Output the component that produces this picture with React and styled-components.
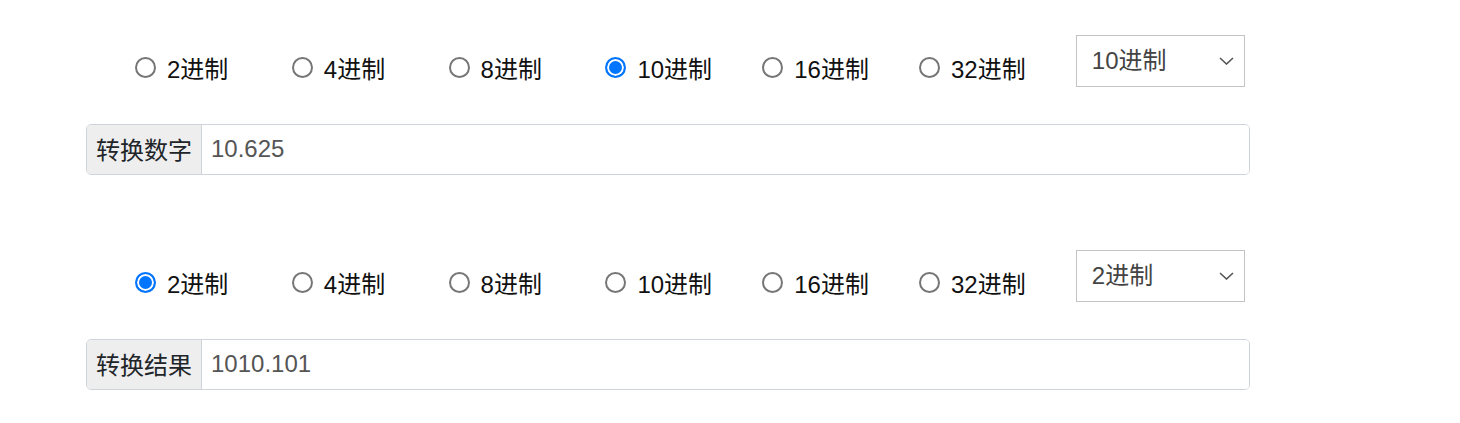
import React, { useState } from 'react';
import styled, { createGlobalStyle } from 'styled-components';

const GlobalStyle = createGlobalStyle`
  body {
    margin: 0;
    background: #fff;
    font-family: "Liberation Sans", "Noto Sans CJK SC", sans-serif;
    color: #212529;
  }
`;

const Page = styled.div`
  padding: 35px 0 0 86px;
  width: 1164px;
`;

const Block = styled.div`
  margin-bottom: 75px;
`;

const RadioRow = styled.div`
  display: flex;
  align-items: flex-start;
  padding-left: 49px;
  height: 52px;
`;

const RadioItem = styled.label`
  display: flex;
  align-items: center;
  gap: 11px;
  width: 156.8px;
  height: 36px;
  margin-top: 14px;
  font-size: 24px;
  color: #111;
  cursor: pointer;
`;

const Radio = styled.input`
  appearance: none;
  box-sizing: border-box;
  width: 21px;
  height: 21px;
  margin: 0;
  border-radius: 50%;
  border: 2px solid #767676;
  background: #fff;
  cursor: pointer;

  &:checked {
    border-color: #0075ff;
    background: #0075ff;
    box-shadow: inset 0 0 0 2px #fff;
  }
`;

const SelectWrap = styled.div`
  position: relative;
  width: 169px;
  height: 52px;

  svg {
    position: absolute;
    right: 11px;
    top: 22px;
    pointer-events: none;
  }
`;

const Select = styled.select`
  appearance: none;
  width: 100%;
  height: 100%;
  border: 1px solid #c4c4c4;
  border-radius: 0;
  background: #fff;
  padding: 0 0 2px 15px;
  font-family: inherit;
  font-size: 24px;
  color: #444;
  outline: none;
`;

const InputGroup = styled.div`
  display: flex;
  height: 51px;
  margin-top: 37px;
  border: 1px solid #ced4da;
  border-radius: 5px;
  overflow: hidden;
  box-sizing: border-box;
`;

const Addon = styled.span`
  display: flex;
  align-items: center;
  padding: 0 9px 2px 9px;
  background: #eee;
  border-right: 1px solid #ced4da;
  font-size: 24px;
  color: #212529;
  white-space: nowrap;
`;

const Field = styled.input`
  flex: 1;
  border: none;
  outline: none;
  padding: 0 9px 2px;
  font-family: inherit;
  font-size: 24px;
  color: #555;
  background: #fff;
`;

const bases = [2, 4, 8, 10, 16, 32];

function convert(value, from, to) {
  const s = String(value).trim().toLowerCase();
  if (!s) return '';
  const [ip, fp = ''] = s.split('.');
  const digits = '0123456789abcdefghijklmnopqrstuv';
  const valid = c => {
    const d = digits.indexOf(c);
    return d >= 0 && d < from;
  };
  if (![...ip, ...fp].every(valid)) return '';
  const n = ip ? parseInt(ip, from) : 0;
  let f = fp ? parseInt(fp, from) / Math.pow(from, fp.length) : 0;
  let out = n.toString(to);
  if (f > 0) {
    let frac = '';
    for (let i = 0; i < 12 && f > 0; i++) {
      f *= to;
      const d = Math.floor(f);
      frac += digits[d];
      f -= d;
    }
    out += '.' + frac;
  }
  return out;
}

function Chevron() {
  return (
    <svg width="15" height="8" viewBox="0 0 15 8">
      <path d="M1 1 L7.5 7 L14 1" fill="none" stroke="#555" strokeWidth="1.6" />
    </svg>
  );
}

function BaseRow({ name, value, onChange }) {
  return (
    <RadioRow>
      {bases.map(b => (
        <RadioItem key={b}>
          <Radio
            type="radio"
            name={name}
            checked={value === b}
            onChange={() => onChange(b)}
          />
          {b}进制
        </RadioItem>
      ))}
      <SelectWrap>
        <Select value={value} onChange={e => onChange(Number(e.target.value))}>
          {bases.map(b => (
            <option key={b} value={b}>{b}进制</option>
          ))}
        </Select>
        <Chevron />
      </SelectWrap>
    </RadioRow>
  );
}

export default function App() {
  const [from, setFrom] = useState(10);
  const [to, setTo] = useState(2);
  const [num, setNum] = useState('10.625');

  return (
    <>
      <GlobalStyle />
      <Page>
        <Block>
          <BaseRow name="from" value={from} onChange={setFrom} />
          <InputGroup>
            <Addon>转换数字</Addon>
            <Field value={num} onChange={e => setNum(e.target.value)} />
          </InputGroup>
        </Block>
        <div>
          <BaseRow name="to" value={to} onChange={setTo} />
          <InputGroup>
            <Addon>转换结果</Addon>
            <Field readOnly value={convert(num, from, to)} />
          </InputGroup>
        </div>
      </Page>
    </>
  );
}
